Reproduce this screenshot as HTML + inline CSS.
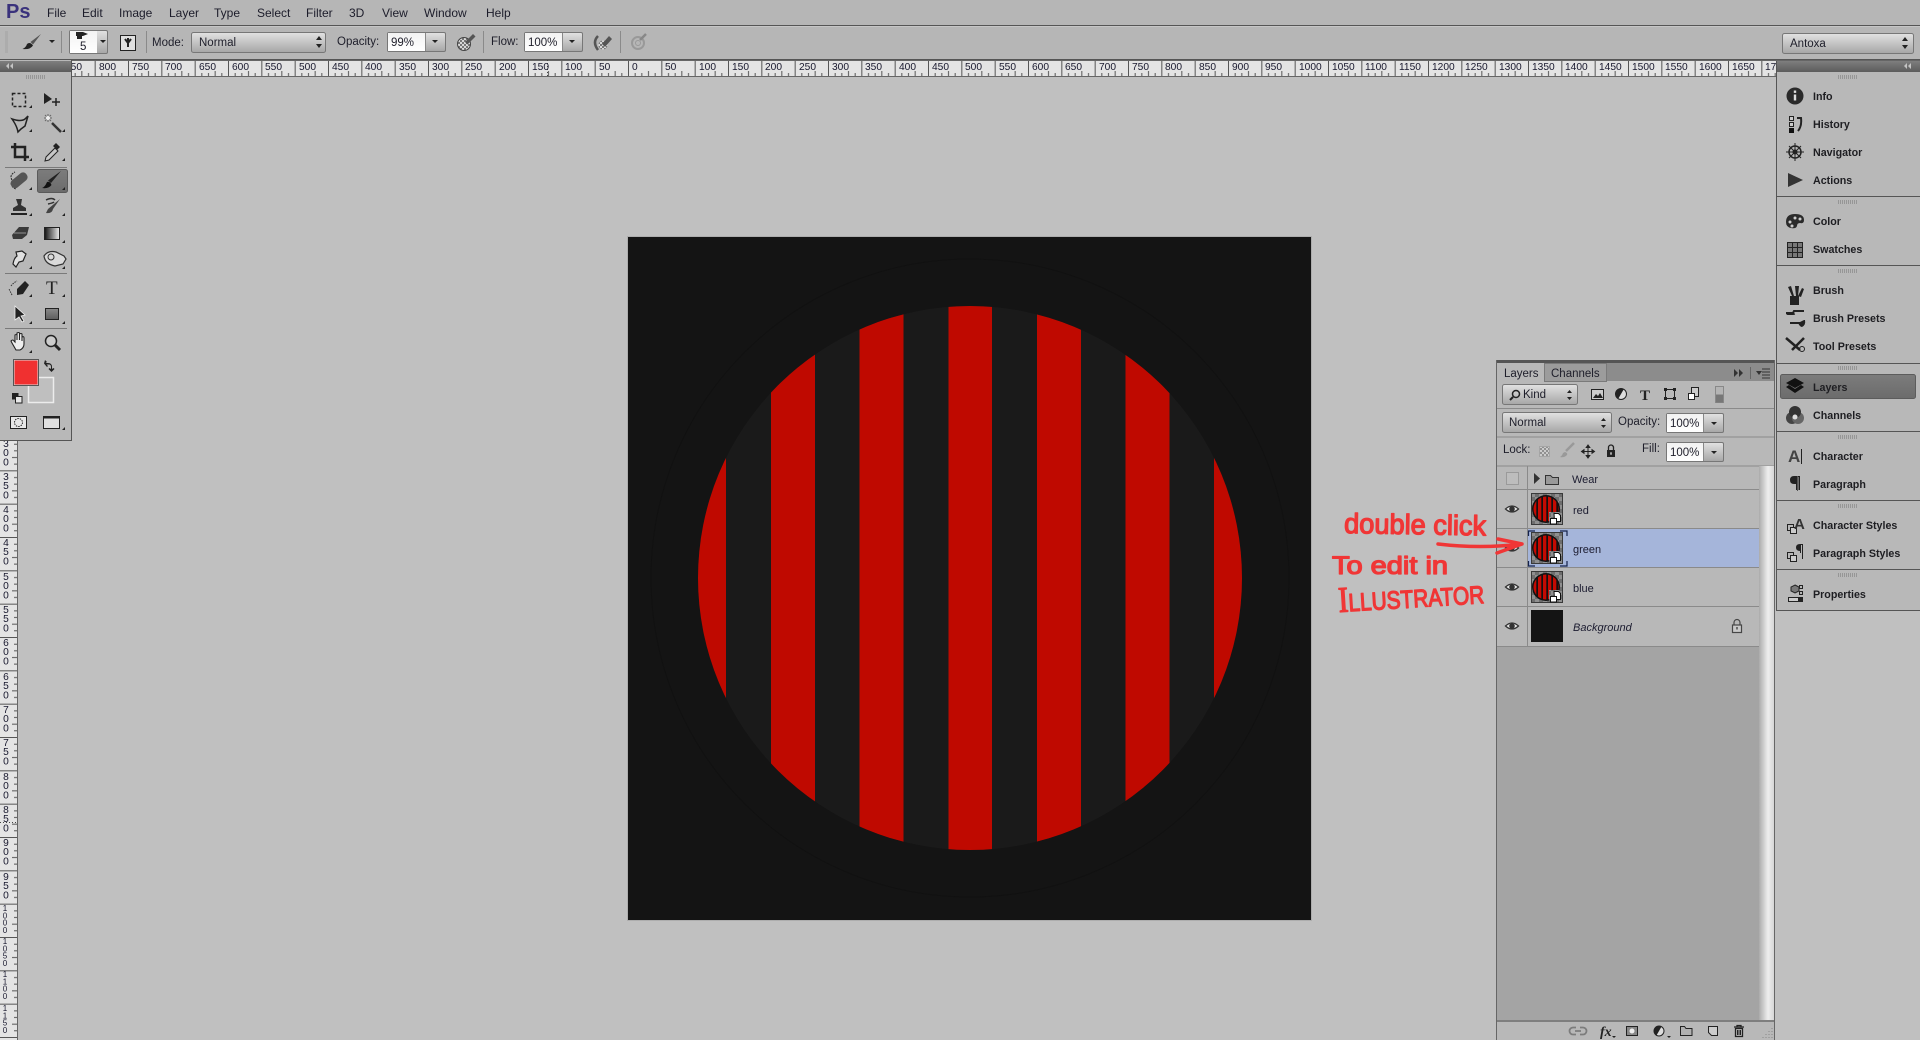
<!DOCTYPE html>
<html lang="en">
<head>
<meta charset="utf-8">
<title>Photoshop</title>
<style>
html,body{margin:0;padding:0;background:#c0c0c0;width:1920px;height:1040px;overflow:hidden}
svg{display:block;font-family:"Liberation Sans",sans-serif}
.m{font-size:12px;fill:#1c1c2a}
.o{font-size:11.5px;fill:#1e1e2a}
.b{font-size:10.7px;font-weight:bold;fill:#1e1e22}
.l{font-size:11px;fill:#1c1c30}
.r{font-size:10.2px;fill:#18182e}
.v{font-size:10.2px;fill:#18182e;text-anchor:middle}
.w{font-size:8px;fill:#18182e;text-anchor:middle}
.h{fill:#f03636;stroke:#f03636;stroke-width:1.3;stroke-linejoin:round}
</style>
</head>
<body>
<svg width="1920" height="1040" viewBox="0 0 1920 1040" xmlns="http://www.w3.org/2000/svg">
<defs>
<linearGradient id="btn" x1="0" y1="0" x2="0" y2="1"><stop offset="0" stop-color="#e2e2e2"/><stop offset="1" stop-color="#a6a6a6"/></linearGradient>
<linearGradient id="inp" x1="0" y1="0" x2="0" y2="1"><stop offset="0" stop-color="#f2f2f2"/><stop offset="1" stop-color="#ffffff"/></linearGradient>
<linearGradient id="hdr" x1="0" y1="0" x2="0" y2="1"><stop offset="0" stop-color="#7e7e7e"/><stop offset="1" stop-color="#5c5c5c"/></linearGradient>
<linearGradient id="hi" x1="0" y1="0" x2="0" y2="1"><stop offset="0" stop-color="#7c7c7c"/><stop offset="1" stop-color="#6c6c6c"/></linearGradient>
<linearGradient id="sb" x1="0" y1="0" x2="1" y2="0"><stop offset="0" stop-color="#ababab"/><stop offset=".6" stop-color="#eeeeee"/><stop offset="1" stop-color="#d6d6d6"/></linearGradient>
<linearGradient id="gr" x1="0" y1="0" x2="1" y2="0"><stop offset="0" stop-color="#111"/><stop offset="1" stop-color="#eee"/></linearGradient>
<linearGradient id="rectg" x1="0" y1="0" x2="0" y2="1"><stop offset="0" stop-color="#8a8a8a"/><stop offset="1" stop-color="#5e5e5e"/></linearGradient>
<pattern id="rt" x="628" y="60" width="33.3333" height="16" patternUnits="userSpaceOnUse">
<path d="M.5 0V16M7.17 13V16M13.83 13V16M20.5 11V16M27.17 13V16" stroke="#555" stroke-width="1" fill="none"/>
</pattern>
<pattern id="rl" x="0" y="237" width="18" height="33.3333" patternUnits="userSpaceOnUse">
<path d="M0 .5H18M14 7.17H18M14 13.83H18M12 20.5H18M14 27.17H18" stroke="#555" stroke-width="1" fill="none"/>
</pattern>
<pattern id="chk" width="8" height="8" patternUnits="userSpaceOnUse">
<rect width="8" height="8" fill="#6e6e6e"/><rect width="4" height="4" fill="#8f8f8f"/><rect x="4" y="4" width="4" height="4" fill="#8f8f8f"/>
</pattern>
<pattern id="chk2" width="4" height="4" patternUnits="userSpaceOnUse">
<rect width="4" height="4" fill="#d8d8d8"/><rect width="2" height="2" fill="#777"/><rect x="2" y="2" width="2" height="2" fill="#777"/>
</pattern>
<clipPath id="cc"><circle cx="15" cy="16" r="12.5"/></clipPath>
<g id="thumb">
<rect x=".5" y=".5" width="31" height="31" fill="url(#chk)" stroke="#3a3a3a"/>
<circle cx="15" cy="16" r="14" fill="#111"/>
<g clip-path="url(#cc)" fill="#c40a02">
<rect x="2" y="2" width="3.300" height="28"/><rect x="7" y="2" width="3.300" height="28"/><rect x="12" y="2" width="3.300" height="28"/><rect x="17" y="2" width="3.300" height="28"/><rect x="22" y="2" width="3.300" height="28"/><rect x="27" y="2" width="3.300" height="28"/>
</g>
<rect x="18" y="19" width="13" height="12" fill="url(#chk)"/>
<path d="M23 20.500h4.500l2 2v6h-6z" fill="#fff" stroke="#111"/>
<rect x="19.500" y="25.500" width="6" height="5.500" fill="#fff" stroke="#111"/>
</g>
<g id="grip"><path d="M.5 0v4M2.500 0v4M4.500 0v4M6.500 0v4M8.500 0v4M10.500 0v4M12.500 0v4M14.500 0v4M16.500 0v4M18.500 0v4" stroke="#8e8e8e" stroke-width=".8"/></g>
<path id="c" d="M0 3H3V0Z" fill="#222"/>
<g id="eye"><path d="M-6.500 0Q0-6 6.500 0Q0 6-6.500 0Z" fill="#e8e8e8" stroke="#333" stroke-width="1.300"/><circle r="2.800" fill="#333"/></g>
<g id="lck"><path d="M-2.500-2v-2.500a2.500 2.500 0 0 1 5 0V-2" fill="none" stroke="#222" stroke-width="1.300"/><rect x="-4" y="-2" width="8" height="7" fill="#222"/><rect x="-.7" y=".3" width="1.400" height="2.400" fill="#ddd"/></g>
</defs>

<!-- backgrounds -->
<rect width="1920" height="1040" fill="#c0c0c0"/>
<rect width="1920" height="60" fill="#b6b6b6"/>
<rect y="25" width="1920" height="1" fill="#555"/>
<rect y="26" width="1920" height="1" fill="#c6c6c6"/>
<rect y="59" width="1920" height="1" fill="#555"/>

<!-- menu -->
<text x="6" y="18" font-size="20" font-weight="bold" fill="#3a327c" font-family="Liberation Sans">Ps</text>
<text class="m" x="47" y="17">File</text>
<text class="m" x="82" y="17">Edit</text>
<text class="m" x="119" y="17">Image</text>
<text class="m" x="169" y="17">Layer</text>
<text class="m" x="214" y="17">Type</text>
<text class="m" x="257" y="17">Select</text>
<text class="m" x="306" y="17">Filter</text>
<text class="m" x="349" y="17">3D</text>
<text class="m" x="382" y="17">View</text>
<text class="m" x="424" y="17">Window</text>
<text class="m" x="486" y="17">Help</text>

<!-- options bar -->
<path d="M5 32h3M5 34h3M5 36h3M5 38h3M5 40h3M5 42h3M5 44h3M5 46h3M5 48h3M5 50h3M5 52h3" stroke="#9a9a9a" stroke-width=".8"/>
<path d="M41 34L30.500 42 33 44.500Z" fill="#555"/><path d="M22.500 49 Q26 47.500 27 44 Q30 41.500 33 45.500 Q30 50 22.500 49Z" fill="#222"/>
<path d="M49 40h6l-3 3z" fill="#222"/>
<rect x="61" y="31" width="1" height="22" fill="#8a8a8a"/>
<rect x="69.500" y="30.500" width="38" height="23" rx="1.500" fill="url(#btn)" stroke="#777"/>
<rect x="70" y="31" width="27" height="22" fill="url(#inp)"/>
<path d="M76 32h7l5 2-5 2h-7zM82 36h-5v3h5z" fill="#222"/>
<text class="o" x="80" y="50">5</text>
<path d="M100 40h6l-3 3z" fill="#222"/>
<rect x="120.500" y="35.500" width="15" height="15" fill="#e0e0e0" stroke="#222"/><path d="M128 38v9M125 39l3 4 3-4" fill="none" stroke="#222" stroke-width="2"/>
<rect x="146" y="31" width="1" height="22" fill="#8a8a8a"/>
<text class="o" x="152" y="46">Mode:</text>
<rect x="191.500" y="32.500" width="134" height="20" rx="2" fill="url(#btn)" stroke="#777"/>
<text class="o" x="199" y="46">Normal</text>
<path d="M316 40h6l-3-4zM316 44h6l-3 4z" fill="#222"/>
<text class="o" x="337" y="45">Opacity:</text>
<rect x="387.500" y="32.500" width="58" height="19" rx="1.500" fill="url(#btn)" stroke="#777"/>
<rect x="388" y="33" width="37" height="18" fill="url(#inp)"/><rect x="425" y="33" width="1" height="18" fill="#888"/>
<text class="o" x="391" y="46">99%</text>
<path d="M432 40h6l-3 3z" fill="#222"/>
<circle cx="464" cy="44" r="6.500" fill="url(#chk2)" stroke="#444"/><path d="M465 42l8-8 2.500 2.500-8 8z" fill="#555"/>
<rect x="483" y="31" width="1" height="22" fill="#8a8a8a"/>
<text class="o" x="491" y="45">Flow:</text>
<rect x="524.500" y="32.500" width="58" height="19" rx="1.500" fill="url(#btn)" stroke="#777"/>
<rect x="525" y="33" width="37" height="18" fill="url(#inp)"/><rect x="562" y="33" width="1" height="18" fill="#888"/>
<text class="o" x="528" y="46">100%</text>
<path d="M569 40h6l-3 3z" fill="#222"/>
<path d="M598 36Q592 42 598 50" fill="none" stroke="#555" stroke-width="2.500"/><circle cx="603" cy="45" r="4.500" fill="url(#chk2)"/><path d="M602 44l7-8 3 3-7 8z" fill="#555"/>
<rect x="620" y="31" width="1" height="22" fill="#8a8a8a"/>
<circle cx="638" cy="43" r="6" fill="none" stroke="#999" stroke-width="2"/><circle cx="638" cy="43" r="2.500" fill="none" stroke="#999"/><path d="M640 40l6-6" stroke="#888" stroke-width="2.500"/>
<rect x="1782.500" y="33.500" width="131" height="20" rx="2" fill="url(#btn)" stroke="#777"/>
<text class="o" x="1790" y="47">Antoxa</text>
<path d="M1902 41h6l-3-4zM1902 45h6l-3 4z" fill="#222"/>

<!-- top ruler -->
<rect y="60" width="1920" height="16" fill="#e4e4e4"/>
<rect y="60" width="1920" height="16" fill="url(#rt)"/>
<rect y="76" width="1920" height="1" fill="#666"/>
<rect y="60" width="1920" height="1" fill="#666"/>
<path d="M547.500 60V76" stroke="#444" stroke-dasharray="1 2"/>
<g transform="translate(1 0)">
<text class="r" x="64" y="70">850</text><text class="r" x="98" y="70">800</text><text class="r" x="131" y="70">750</text><text class="r" x="164" y="70">700</text><text class="r" x="198" y="70">650</text><text class="r" x="231" y="70">600</text><text class="r" x="264" y="70">550</text><text class="r" x="298" y="70">500</text><text class="r" x="331" y="70">450</text><text class="r" x="364" y="70">400</text><text class="r" x="398" y="70">350</text><text class="r" x="431" y="70">300</text><text class="r" x="464" y="70">250</text><text class="r" x="498" y="70">200</text><text class="r" x="531" y="70">150</text><text class="r" x="564" y="70">100</text><text class="r" x="598" y="70">50</text><text class="r" x="631" y="70">0</text>
<text class="r" x="664" y="70">50</text><text class="r" x="698" y="70">100</text><text class="r" x="731" y="70">150</text><text class="r" x="764" y="70">200</text><text class="r" x="798" y="70">250</text><text class="r" x="831" y="70">300</text><text class="r" x="864" y="70">350</text><text class="r" x="898" y="70">400</text><text class="r" x="931" y="70">450</text><text class="r" x="964" y="70">500</text><text class="r" x="998" y="70">550</text><text class="r" x="1031" y="70">600</text><text class="r" x="1064" y="70">650</text><text class="r" x="1098" y="70">700</text><text class="r" x="1131" y="70">750</text><text class="r" x="1164" y="70">800</text><text class="r" x="1198" y="70">850</text><text class="r" x="1231" y="70">900</text><text class="r" x="1264" y="70">950</text><text class="r" x="1298" y="70">1000</text><text class="r" x="1331" y="70">1050</text><text class="r" x="1364" y="70">1100</text><text class="r" x="1398" y="70">1150</text><text class="r" x="1431" y="70">1200</text><text class="r" x="1464" y="70">1250</text><text class="r" x="1498" y="70">1300</text><text class="r" x="1531" y="70">1350</text><text class="r" x="1564" y="70">1400</text><text class="r" x="1598" y="70">1450</text><text class="r" x="1631" y="70">1500</text><text class="r" x="1664" y="70">1550</text><text class="r" x="1698" y="70">1600</text><text class="r" x="1731" y="70">1650</text><text class="r" x="1764" y="70">1700</text>
</g>

<!-- left ruler -->
<rect x="0" y="77" width="18" height="963" fill="#e4e4e4"/>
<rect x="0" y="77" width="18" height="963" fill="url(#rl)"/>
<rect x="17" y="77" width="1" height="963" fill="#666"/>
<path d="M0 822.500H18" stroke="#444" stroke-dasharray="1 2"/>
<text class="v" x="6" y="447">3<tspan x="6" dy="9.200">0</tspan><tspan x="6" dy="9.200">0</tspan></text>
<text class="v" x="6" y="480">3<tspan x="6" dy="9.200">5</tspan><tspan x="6" dy="9.200">0</tspan></text>
<text class="v" x="6" y="513">4<tspan x="6" dy="9.200">0</tspan><tspan x="6" dy="9.200">0</tspan></text>
<text class="v" x="6" y="546">4<tspan x="6" dy="9.200">5</tspan><tspan x="6" dy="9.200">0</tspan></text>
<text class="v" x="6" y="580">5<tspan x="6" dy="9.200">0</tspan><tspan x="6" dy="9.200">0</tspan></text>
<text class="v" x="6" y="613">5<tspan x="6" dy="9.200">5</tspan><tspan x="6" dy="9.200">0</tspan></text>
<text class="v" x="6" y="646">6<tspan x="6" dy="9.200">0</tspan><tspan x="6" dy="9.200">0</tspan></text>
<text class="v" x="6" y="680">6<tspan x="6" dy="9.200">5</tspan><tspan x="6" dy="9.200">0</tspan></text>
<text class="v" x="6" y="713">7<tspan x="6" dy="9.200">0</tspan><tspan x="6" dy="9.200">0</tspan></text>
<text class="v" x="6" y="746">7<tspan x="6" dy="9.200">5</tspan><tspan x="6" dy="9.200">0</tspan></text>
<text class="v" x="6" y="780">8<tspan x="6" dy="9.200">0</tspan><tspan x="6" dy="9.200">0</tspan></text>
<text class="v" x="6" y="813">8<tspan x="6" dy="9.200">5</tspan><tspan x="6" dy="9.200">0</tspan></text>
<text class="v" x="6" y="846">9<tspan x="6" dy="9.200">0</tspan><tspan x="6" dy="9.200">0</tspan></text>
<text class="v" x="6" y="880">9<tspan x="6" dy="9.200">5</tspan><tspan x="6" dy="9.200">0</tspan></text>
<text class="w" x="5" y="911">1<tspan x="5" dy="7.300">0</tspan><tspan x="5" dy="7.300">0</tspan><tspan x="5" dy="7.300">0</tspan></text>
<text class="w" x="5" y="944">1<tspan x="5" dy="7.300">0</tspan><tspan x="5" dy="7.300">5</tspan><tspan x="5" dy="7.300">0</tspan></text>
<text class="w" x="5" y="977">1<tspan x="5" dy="7.300">1</tspan><tspan x="5" dy="7.300">0</tspan><tspan x="5" dy="7.300">0</tspan></text>
<text class="w" x="5" y="1011">1<tspan x="5" dy="7.300">1</tspan><tspan x="5" dy="7.300">5</tspan><tspan x="5" dy="7.300">0</tspan></text>

<!-- document -->
<rect x="627" y="236" width="685" height="685" fill="#adadad"/>
<rect x="628" y="237" width="683" height="683" fill="#141414"/>
<circle cx="970" cy="578" r="319" fill="none" stroke="#111" stroke-width="1"/>
<circle cx="970" cy="578" r="272" fill="#1a1a1a"/>
<clipPath id="big"><circle cx="970" cy="578" r="272"/></clipPath>
<g clip-path="url(#big)" fill="#bf0900">
<rect x="682" y="300" width="44" height="560"/>
<rect x="771" y="300" width="44" height="560"/>
<rect x="859.500" y="300" width="44" height="560"/>
<rect x="948.500" y="300" width="43.500" height="560"/>
<rect x="1037" y="300" width="44" height="560"/>
<rect x="1125.500" y="300" width="44" height="560"/>
<rect x="1214" y="300" width="44" height="560"/>
</g>

<!-- tools panel -->
<rect x="0" y="60" width="71" height="380" fill="#b8b8b8"/>
<rect x="71" y="60" width="1" height="381" fill="#555"/><rect x="0" y="440" width="72" height="1" fill="#555"/>
<rect x="0" y="61" width="71" height="11" fill="url(#hdr)"/>
<path d="M9 63v6l-3-3zM13 63v6l-3-3z" fill="#c4c4c4"/>
<use href="#grip" x="26" y="75"/>
<rect x="5" y="167" width="62" height="1" fill="#7a7a7a"/><rect x="5" y="273" width="62" height="1" fill="#7a7a7a"/><rect x="5" y="328" width="62" height="1" fill="#7a7a7a"/>
<rect x="37.500" y="169.500" width="30" height="23" rx="2" fill="url(#hi)" stroke="#5a5a5a"/>
<!-- marquee / move -->
<rect x="12.500" y="93.500" width="13" height="13" fill="none" stroke="#222" stroke-width="1.500" stroke-dasharray="3 2"/><use href="#c" x="29" y="105"/>
<path d="M44 93v11l8-5z" fill="#222"/><path d="M56 98v8M52 102h8" stroke="#222" stroke-width="1.500"/>
<!-- lasso / wand -->
<path d="M12 119q9 3 13 0l3-3-3 10-4 3-3 3q-1-6-6-13z" fill="none" stroke="#222" stroke-width="1.500"/><use href="#c" x="29" y="129"/>
<path d="M52 123l9 9" stroke="#333" stroke-width="2.500"/><path d="M48 114v8M44 118h8M45 115l6 6M51 115l-6 6" stroke="#666"/><circle cx="48" cy="118" r="2" fill="#eee"/><use href="#c" x="62" y="129"/>
<!-- crop / eyedropper -->
<path d="M15 143v14h14M11 147h14v14" fill="none" stroke="#222" stroke-width="2.500"/><use href="#c" x="29" y="158"/>
<path d="M46 157l9-9 3 3-9 9-4 1z" fill="#c8c8c8" stroke="#222"/><path d="M53 146l3-3 4 4-3 3z" fill="#222"/><use href="#c" x="62" y="158"/>
<!-- heal / brush -->
<path d="M12 180q-3-5 3-8M11 183q1 5 5 6" fill="none" stroke="#222" stroke-dasharray="2 1"/><rect x="10" y="176" width="19" height="9" rx="4" transform="rotate(-40 19 181)" fill="#555"/><use href="#c" x="29" y="187"/>
<path d="M61 171L51 183 48 180.500Z" fill="#222"/><path d="M42 188q3-1 5-6 3-1 4.500 3-3 4-9.500 3z" fill="#111"/><use href="#c" x="62" y="187"/>
<!-- stamp / history -->
<path d="M16 199h6l-1 6 5 3v3H13v-3l5-3z" fill="#333"/><rect x="11" y="213" width="16" height="2" fill="#222"/><use href="#c" x="29" y="213"/>
<path d="M60 199l-12 10-2 4q6 1 7-4" fill="#444"/><path d="M46 200q6-3 9 0M48 204q5-1 6-2" fill="none" stroke="#333" stroke-width="1.500"/><use href="#c" x="62" y="213"/>
<!-- eraser / gradient -->
<path d="M12 235l7-8h10l-2 8-5 4H13z" fill="#3a3a3a"/><path d="M14 233h12" stroke="#aaa" stroke-width=".8"/><use href="#c" x="29" y="240"/>
<rect x="44.500" y="227.500" width="15" height="12" fill="url(#gr)" stroke="#222"/><use href="#c" x="62" y="240"/>
<!-- dodge / smudge -->
<path d="M13 264q1-6 4-8l-1-4 6-1 4 3-3 7-4 1-3 5z" fill="#e0e0e0" stroke="#222" stroke-width="1.200"/><use href="#c" x="29" y="266"/>
<path d="M44 256q4-6 12-4l8 4 2 3-3 5-8 2q-10-2-11-10z" fill="#dadada" stroke="#333" stroke-width="1.200"/><circle cx="51" cy="257" r="3" fill="none" stroke="#333"/><use href="#c" x="62" y="266"/>
<!-- pen / type -->
<path d="M17 289l8-8 4 4-6 9-6 1z" fill="#222"/><path d="M11 286q2-3 6-5M12 295l-3-6" fill="none" stroke="#333" stroke-dasharray="1.500 1"/><use href="#c" x="29" y="294"/>
<text x="46" y="294" font-family="Liberation Serif" font-size="19" font-weight="normal" fill="#222">T</text><use href="#c" x="62" y="294"/>
<!-- path sel / shape -->
<path d="M15 306v14l4-3 3 5 2-1-3-5 4-1z" fill="#222" stroke="#eee" stroke-width=".8"/><use href="#c" x="29" y="321"/>
<rect x="45.500" y="308.500" width="13" height="11" fill="url(#rectg)" stroke="#222"/><use href="#c" x="62" y="321"/>
<!-- hand / zoom -->
<g transform="translate(0 2)"><path d="M12 341l-1-2q2-2 3 0l1 1v-7q2-1 2 0v5-7q2-1 2.500 0v7-6q2-1 2.500 0v7-4q2-1 2 1v6q0 4-4 6h-4z" fill="#eee" stroke="#222" stroke-width="1.100"/></g><use href="#c" x="29" y="350"/>
<circle cx="51" cy="341" r="5.500" fill="#ccc" stroke="#222" stroke-width="1.500"/><path d="M55 345l5 5" stroke="#222" stroke-width="3"/>
<!-- colors -->
<path d="M47 360l2 2-1.500 1h2.500q4 0 4 4v2l1.500-1 1 1-3 3-3-3 1-1 1.500 1v-2q0-2.500-2-2.500h-2.500l1.500 1.500-1 1-3-3.500z" fill="#222" transform="translate(-2 0)"/>
<rect x="28.500" y="377.500" width="25" height="25" fill="#bfbfbf" stroke="#ececec" stroke-width="1.500"/>
<rect x="14" y="360" width="24" height="25" fill="#f03030" stroke="#dcdcdc" stroke-width="1"/><rect x="13.500" y="359.500" width="25" height="26" fill="none" stroke="#555"/>
<rect x="12" y="393" width="6.500" height="6.500" fill="#222"/><rect x="15.500" y="396.500" width="6.500" height="6.500" fill="#e8e8e8" stroke="#222"/>
<!-- modes -->
<rect x="10.500" y="416.500" width="16" height="12" fill="#e8e8e8" stroke="#222"/><circle cx="18.500" cy="422.500" r="4" fill="none" stroke="#222" stroke-dasharray="1.500 1"/>
<rect x="43.500" y="416.500" width="16" height="12" fill="#e0e0e0" stroke="#222"/><rect x="43" y="416" width="17" height="2.500" fill="#222"/><use href="#c" x="62" y="427"/>

<!-- right dock -->
<rect x="1776" y="61" width="144" height="550" fill="#b8b8b8"/>
<rect x="1776" y="61" width="144" height="11" fill="url(#hdr)"/>
<path d="M1907 63v6l-3-3zM1911 63v6l-3-3z" fill="#c4c4c4"/>
<rect x="1776" y="61" width="1" height="550" fill="#555"/>
<path d="M1776 196.500H1920M1776 265.500H1920M1776 363.500H1920M1776 431.500H1920M1776 500.500H1920M1776 569.500H1920M1776 610.500H1920" stroke="#555"/>
<use href="#grip" x="1838" y="75"/><use href="#grip" x="1838" y="200"/><use href="#grip" x="1838" y="269"/><use href="#grip" x="1838" y="366"/><use href="#grip" x="1838" y="435"/><use href="#grip" x="1838" y="504"/><use href="#grip" x="1838" y="573"/>
<rect x="1780.500" y="374.500" width="135" height="24" rx="2" fill="url(#hi)" stroke="#5c5c5c"/>
<text class="b" x="1813" y="100">Info</text>
<text class="b" x="1813" y="128">History</text>
<text class="b" x="1813" y="156">Navigator</text>
<text class="b" x="1813" y="184">Actions</text>
<text class="b" x="1813" y="225">Color</text>
<text class="b" x="1813" y="253">Swatches</text>
<text class="b" x="1813" y="294">Brush</text>
<text class="b" x="1813" y="322">Brush Presets</text>
<text class="b" x="1813" y="350">Tool Presets</text>
<text class="b" x="1813" y="391">Layers</text>
<text class="b" x="1813" y="419">Channels</text>
<text class="b" x="1813" y="460">Character</text>
<text class="b" x="1813" y="488">Paragraph</text>
<text class="b" x="1813" y="529">Character Styles</text>
<text class="b" x="1813" y="557">Paragraph Styles</text>
<text class="b" x="1813" y="598">Properties</text>
<!-- dock icons -->
<circle cx="1795" cy="96" r="8.500" fill="#2a2a2a"/><rect x="1793.800" y="94.500" width="2.400" height="6" fill="#ddd"/><rect x="1793.800" y="90.500" width="2.400" height="2.400" fill="#ddd"/>
<rect x="1789.500" y="116.500" width="4" height="4" fill="#ccc" stroke="#222"/><rect x="1789.500" y="122.500" width="4" height="4" fill="#ccc" stroke="#222"/><rect x="1789" y="128" width="5" height="5" fill="#111"/><path d="M1797 118h4q1 8-3 13" fill="none" stroke="#222" stroke-width="2"/>
<circle cx="1795" cy="152" r="6" fill="none" stroke="#222" stroke-width="1.500"/><path d="M1786 152h18M1795 143v18M1789 146l12 12M1801 146l-12 12" stroke="#222"/><circle cx="1795" cy="152" r="2.500" fill="#222"/>
<path d="M1788 173v14l15-7z" fill="#333"/>
<path d="M1786 222q0-8 9-8t9 6q0 4-4 3-3 0-3 3-1 3-6 2-5-1-5-6z" fill="#2a2a2a"/><circle cx="1790" cy="222" r="1.500" fill="#ccc"/><circle cx="1795" cy="218" r="1.500" fill="#ccc"/><circle cx="1800" cy="219" r="1.500" fill="#ccc"/><circle cx="1792" cy="226" r="1.500" fill="#ccc"/>
<rect x="1787.500" y="242.500" width="15" height="15" fill="#777" stroke="#222"/><path d="M1792.500 243v15M1797.500 243v15M1788 247.500h15M1788 252.500h15" stroke="#222"/>
<path d="M1790 296h9v9h-9z" fill="#222"/><path d="M1792 296l-4-9 3-1 3 10zM1796 296l-1-10 2 0 2 0-1 10zM1798 296l4-8 2 1-3 8z" fill="#222"/>
<path d="M1786 313h7l1-2h10M1790 323h14" stroke="#222" stroke-width="2"/><path d="M1786 315q5-4 8-2t-2 2zM1804 320l-6 3q2 4 4 4 4-2 3-7z" fill="#222"/>
<path d="M1786 338l14 12M1804 338l-12 12" stroke="#222" stroke-width="2.500"/><circle cx="1802" cy="349" r="2.500" fill="none" stroke="#222"/>
<path d="M1795 378l9 5-9 5-9-5z" fill="#111"/><path d="M1786 387l3-2 6 4 6-4 3 2-9 6z" fill="#111"/>
<circle cx="1792" cy="418" r="6" fill="#444"/><circle cx="1798" cy="418" r="6" fill="#666"/><circle cx="1795" cy="412" r="6" fill="#333"/><circle cx="1795" cy="417" r="2.500" fill="#ddd"/>
<text x="1788" y="462" font-size="17" font-weight="bold" fill="#444">A</text><rect x="1801" y="449" width="1" height="15" fill="#222"/>
<path d="M1800 476h-6q-4 0-4 4t4 4h2v6h1.500v-13h1v13h1.500z" fill="#222"/><rect x="1797" y="476" width="1" height="15" fill="#555"/>
<rect x="1787.500" y="524.500" width="6" height="6" fill="none" stroke="#222"/><rect x="1790.500" y="527.500" width="6" height="6" fill="#ccc" stroke="#222"/><text x="1794" y="529" font-size="15" font-weight="bold" fill="#333">A</text>
<rect x="1787.500" y="552.500" width="6" height="6" fill="none" stroke="#222"/><rect x="1790.500" y="555.500" width="6" height="6" fill="#ccc" stroke="#222"/><path d="M1803 544h-3q-4 0-4 3.500t4 3.500v2h1v-8h1v14h1z" fill="#222"/>
<path d="M1795 585l4 2v4l-4 2-4-2v-4z" fill="#777" stroke="#222"/><rect x="1799.500" y="585.500" width="3" height="3" fill="none" stroke="#222"/><rect x="1799.500" y="591.500" width="3" height="3" fill="none" stroke="#222"/><rect x="1788.500" y="597.500" width="14" height="4" fill="#ccc" stroke="#222"/><rect x="1798" y="598" width="5" height="3" fill="#222"/>

<!-- layers panel -->
<rect x="1496" y="360" width="279" height="680" fill="#b8b8b8"/>
<rect x="1496" y="360" width="279" height="3" fill="#555"/>
<rect x="1497" y="363" width="277" height="18" fill="#8c8c8c"/>
<rect x="1497" y="363" width="47" height="19" fill="#b8b8b8"/>
<rect x="1544.500" y="363.500" width="62" height="18" fill="#9c9c9c" stroke="#7a7a7a"/>
<text class="o" x="1504" y="377">Layers</text>
<text class="o" x="1551" y="377">Channels</text>
<path d="M1734 369v8l4-4zM1739 369v8l4-4z" fill="#333"/><rect x="1750" y="367" width="1" height="12" fill="#666"/>
<path d="M1756 371h6l-3 4z" fill="#333"/><path d="M1762 369h8M1762 372h8M1762 375h8M1762 378h8" stroke="#333"/>
<rect x="1496" y="360" width="1" height="680" fill="#666"/>
<rect x="1774" y="360" width="1" height="680" fill="#666"/>
<!-- filter row -->
<rect x="1497" y="408" width="277" height="1" fill="#8a8a8a"/><rect x="1497" y="436.500" width="277" height="1" fill="#8a8a8a"/><rect x="1497" y="465.500" width="277" height="1" fill="#8a8a8a"/>
<rect x="1502.500" y="384.500" width="75" height="20" rx="2" fill="url(#btn)" stroke="#777"/>
<circle cx="1516" cy="394" r="3.500" fill="none" stroke="#222" stroke-width="1.500"/><path d="M1513 397l-3 3" stroke="#222" stroke-width="2"/>
<text class="o" x="1523" y="398">Kind</text>
<path d="M1567 393h5l-2.500-3zM1567 397h5l-2.500 3z" fill="#222"/>
<rect x="1591.500" y="389.500" width="12" height="10" fill="#ccc" stroke="#222"/><path d="M1593 398l3-4 2 2 2-3 3 5z" fill="#222"/>
<circle cx="1621" cy="394" r="5.500" fill="#ddd" stroke="#222"/><path d="M1621 388.500a5.500 5.500 0 0 0 0 11z" fill="#222" transform="rotate(30 1621 394)"/>
<text x="1640" y="400" font-family="Liberation Serif" font-weight="bold" font-size="15" fill="#222">T</text>
<rect x="1665.500" y="389.500" width="9" height="9" fill="none" stroke="#222"/><path d="M1664 388h3v3h-3zM1673 388h3v3h-3zM1664 397h3v3h-3zM1673 397h3v3h-3z" fill="#222"/>
<rect x="1691.500" y="387.500" width="7" height="9" fill="#ccc" stroke="#222"/><rect x="1688.500" y="393.500" width="6" height="6" fill="#fff" stroke="#222"/>
<rect x="1715.500" y="386.500" width="8" height="16" fill="#b4b4b4" stroke="#888"/><rect x="1716" y="394.500" width="7" height="8" fill="#777"/>
<!-- blend row -->
<rect x="1502.500" y="412.500" width="109" height="20" rx="2" fill="url(#btn)" stroke="#777"/>
<text class="o" x="1509" y="426">Normal</text>
<path d="M1601 421h5l-2.500-3zM1601 425h5l-2.500 3z" fill="#222"/>
<text class="o" x="1618" y="425">Opacity:</text>
<rect x="1666.500" y="413.500" width="57" height="19" rx="1.500" fill="url(#btn)" stroke="#777"/>
<rect x="1667" y="414" width="36" height="18" fill="url(#inp)"/><rect x="1703" y="414" width="1" height="18" fill="#888"/>
<text class="o" x="1670" y="427">100%</text><path d="M1711 422h6l-3 3z" fill="#222"/>
<!-- lock row -->
<text class="o" x="1503" y="453">Lock:</text>
<rect x="1539.500" y="446.500" width="10" height="10" fill="url(#chk2)" stroke="#999" opacity=".6"/>
<path d="M1574 443l-8 8" stroke="#999" stroke-width="2.500" fill="none"/><path d="M1560 457q2-1 3-4l2-1q3 1 2 3-3 3-7 2z" fill="#999"/>
<path d="M1588 446v11M1582 451.500h12M1586.200 447.500l1.800-2.500 1.800 2.500zM1586.200 455.500l1.800 2.500 1.800-2.500zM1584 449.700l-2.500 1.800 2.500 1.800zM1592 449.700l2.500 1.800-2.500 1.800z" stroke="#222" stroke-width="1" fill="#222"/>
<use href="#lck" x="1611" y="452"/>
<text class="o" x="1642" y="452">Fill:</text>
<rect x="1666.500" y="442.500" width="57" height="19" rx="1.500" fill="url(#btn)" stroke="#777"/>
<rect x="1667" y="443" width="36" height="18" fill="url(#inp)"/><rect x="1703" y="443" width="1" height="18" fill="#888"/>
<text class="o" x="1670" y="456">100%</text><path d="M1711 451h6l-3 3z" fill="#222"/>
<!-- list -->
<rect x="1497" y="647" width="262" height="373" fill="#a4a4a4"/>
<rect x="1759" y="466" width="15" height="554" fill="url(#sb)"/>
<rect x="1528" y="528.500" width="231" height="39" fill="#a5b5da"/>
<path d="M1497 489.500H1759M1497 528.500H1759M1497 567.500H1759M1497 606.500H1759M1497 646.500H1759" stroke="#8a8a8a"/>
<rect x="1527" y="466" width="1" height="181" fill="#8a8a8a"/>
<rect x="1506.500" y="472.500" width="12" height="12" fill="#bdbdbd" stroke="#9a9a9a"/>
<path d="M1534 473v11l6-5.500z" fill="#333"/>
<path d="M1545.500 475.500h5l2 2h6v7h-13z" fill="#999" stroke="#333"/>
<text class="l" x="1572" y="483">Wear</text>
<use href="#eye" x="1512" y="509"/><use href="#eye" x="1512" y="548"/><use href="#eye" x="1512" y="587"/><use href="#eye" x="1512" y="626"/>
<use href="#thumb" x="1531" y="493"/>
<use href="#thumb" x="1531" y="532"/>
<use href="#thumb" x="1531" y="571"/>
<path d="M1535 531h-6.500v5M1560 531h7v5M1535 566h-6.500v-5M1560 566h7v-5" fill="none" stroke="#14224a" stroke-width="1.200"/>
<rect x="1531" y="610" width="32" height="32" fill="#141414"/>
<text class="l" x="1573" y="514">red</text>
<text class="l" x="1573" y="553">green</text>
<text class="l" x="1573" y="592">blue</text>
<text class="l" x="1573" y="631" font-style="italic">Background</text>
<g transform="translate(1737 627)" opacity=".85"><path d="M-3-2v-2.500a3 3 0 0 1 6 0V-2" fill="none" stroke="#333" stroke-width="1.200"/><rect x="-4.500" y="-2" width="9" height="7.500" fill="#ccc" stroke="#333" stroke-width="1.200"/><rect x="-.7" y="0" width="1.400" height="2.500" fill="#333"/></g>
<!-- footer -->
<rect x="1497" y="1020" width="277" height="2" fill="#7e7e7e"/>
<rect x="1497" y="1022" width="277" height="18" fill="#b8b8b8"/>
<path d="M1576 1027.500h-3a3.500 3.500 0 0 0 0 7h3M1580 1027.500h3a3.500 3.500 0 0 1 0 7h-3M1575 1031h6" fill="none" stroke="#7c7c7c" stroke-width="1.800"/>
<text x="1600" y="1036" font-family="Liberation Serif" font-style="italic" font-weight="bold" font-size="14" fill="#222">fx</text><path d="M1612 1036h4l-2 2z" fill="#222"/>
<rect x="1626.500" y="1026.500" width="11" height="9" fill="#888" stroke="#222"/><circle cx="1632" cy="1031" r="2.500" fill="#eee"/>
<circle cx="1659" cy="1031" r="5" fill="#ddd" stroke="#222"/><path d="M1659 1026a5 5 0 0 0 0 10z" fill="#222" transform="rotate(30 1659 1031)"/><path d="M1667 1036h4l-2 2z" fill="#222"/>
<path d="M1680.500 1026.500h4l1.500 2h6v7h-11.500z" fill="#b0b0b0" stroke="#222"/>
<path d="M1708.500 1026.500h9v9h-6l-3-3z" fill="#ccc" stroke="#222"/>
<path d="M1734 1027h10M1737 1027v-1.500h4v1.500M1735.500 1028.500h7v8h-7z" fill="none" stroke="#222" stroke-width="1.300"/><path d="M1737.500 1030v5M1739 1030v5M1740.500 1030v5" stroke="#222"/>
<path d="M1772 1028v1M1769 1031v1M1772 1031v1M1766 1034v1M1769 1034v1M1772 1034v1M1763 1037v1M1766 1037v1M1769 1037v1M1772 1037v1" stroke="#888"/>

<!-- annotation -->
<text class="h" x="1344" y="533" font-size="28" textLength="142" lengthAdjust="spacingAndGlyphs" transform="rotate(1 1344 533)">double click</text>
<text class="h" x="1332" y="574" font-size="25" textLength="116" lengthAdjust="spacingAndGlyphs">To edit in</text>
<text class="h" x="1339" y="612" font-size="25" textLength="146" lengthAdjust="spacingAndGlyphs" transform="rotate(-3.500 1339 612)"><tspan font-size="36" font-family="Liberation Serif">I</tspan>LLUSTRATOR</text>
<path d="M1438 544Q1480 549 1522 544M1498 539L1522 544L1497 553" fill="none" stroke="#f03636" stroke-width="3.500" stroke-linecap="round" stroke-linejoin="round"/>
</svg>
</body>
</html>
